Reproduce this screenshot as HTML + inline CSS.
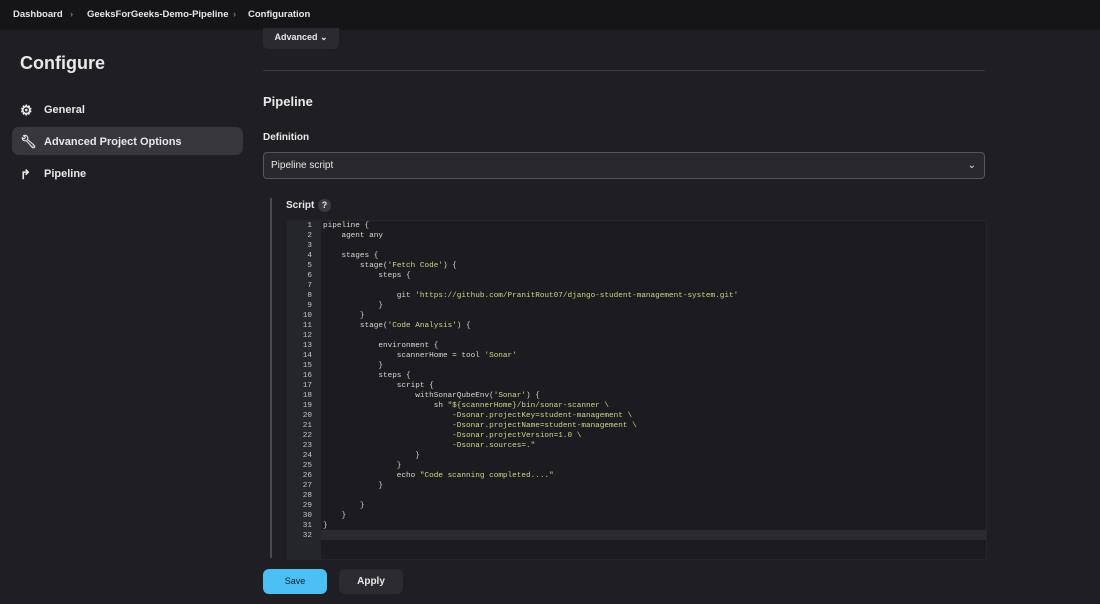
<!DOCTYPE html><html><head><style>
body{margin:0;width:1100px;height:604px;background:#1f1f23;font-family:"Liberation Sans",sans-serif;color:#e8e8ea;overflow:hidden;position:relative}
.hdr{position:absolute;left:0;top:0;width:1100px;height:30px;background:#151518;font-size:9.5px;font-weight:bold}
.hdr span{position:absolute;top:9px}
.a{position:absolute}
.nav{font-size:11px;font-weight:bold}
.code{position:absolute;left:287px;top:220px;width:698px;height:338px;background:#1c1c20;border:1px solid #26262a}
.gut{position:absolute;left:0;top:0;width:33px;height:338px;background:#25262b}
pre{margin:0;font-family:"Liberation Mono",monospace;font-size:7.7px;line-height:10px;color:#d8d8d8}
.ln{position:absolute;left:0;top:0;width:24px;text-align:right;color:#c8c8c8}
.src{position:absolute;left:35px;top:0}
.s{color:#c8d88a}
</style></head><body>
<div class="hdr"><span style="left:13px">Dashboard</span><span style="left:70px;color:#777">›</span><span style="left:87px">GeeksForGeeks-Demo-Pipeline</span><span style="left:233px;color:#777">›</span><span style="left:248px">Configuration</span></div>
<div class="a" style="left:263px;top:28px;width:76px;height:21px;background:#2a2a30;border-radius:0 0 6px 6px;font-size:9px;font-weight:bold;text-align:center;line-height:19px">Advanced ⌄</div>
<div class="a" style="left:20px;top:53px;font-size:18px;font-weight:bold">Configure</div>
<div class="a" style="left:12px;top:127px;width:231px;height:28px;background:#37373d;border-radius:7px"></div>
<div class="a nav" style="left:20px;top:102px;font-size:14px">⚙</div><div class="a nav" style="left:44px;top:104px">General</div>
<div class="a nav" style="left:20px;top:134px;font-size:13px">🔧︎</div><div class="a nav" style="left:44px;top:136px">Advanced Project Options</div>
<div class="a nav" style="left:20px;top:167px;font-size:13px">↱</div><div class="a nav" style="left:44px;top:168px">Pipeline</div>
<div class="a" style="left:263px;top:70px;width:722px;height:1px;background:#3a3a40"></div>
<div class="a" style="left:263px;top:94px;font-size:13px;font-weight:bold">Pipeline</div>
<div class="a" style="left:263px;top:132px;font-size:10px;font-weight:bold">Definition</div>
<div class="a" style="left:263px;top:152px;width:720px;height:25px;background:#28282d;border:1px solid #55555b;border-radius:4px;font-size:10px;line-height:25px;text-indent:7px">Pipeline script<span style="position:absolute;right:8px;top:0">⌄</span></div>
<div class="a" style="left:270px;top:198px;width:2px;height:360px;background:#4a4a50"></div>
<div class="a" style="left:286px;top:200px;font-size:10px;font-weight:bold">Script</div>
<div class="a" style="left:318px;top:199px;width:13px;height:13px;border-radius:50%;background:#3a3a40;font-size:9px;text-align:center;line-height:13px;font-weight:bold">?</div>
<div class="code"><div class="gut"></div>
<div style="position:absolute;left:33px;top:309px;width:665px;height:10px;background:#2a2a2f"></div>
<pre class="ln" style="top:0">1
2
3
4
5
6
7
8
9
10
11
12
13
14
15
16
17
18
19
20
21
22
23
24
25
26
27
28
29
30
31
32</pre>
<pre class="src">pipeline {
    agent any

    stages {
        stage(<span class="s">'Fetch Code'</span>) {
            steps {

                git <span class="s">'https://github.com/PranitRout07/django-student-management-system.git'</span>
            }
        }
        stage(<span class="s">'Code Analysis'</span>) {

            environment {
                scannerHome = tool <span class="s">'Sonar'</span>
            }
            steps {
                script {
                    withSonarQubeEnv(<span class="s">'Sonar'</span>) {
                        sh <span class="s">"${scannerHome}/bin/sonar-scanner \
                            -Dsonar.projectKey=student-management \
                            -Dsonar.projectName=student-management \
                            -Dsonar.projectVersion=1.0 \
                            -Dsonar.sources=."</span>
                    }
                }
                echo <span class="s">"Code scanning completed...."</span>
            }

        }
    }
}
</pre></div>
<div class="a" style="left:263px;top:569px;width:64px;height:25px;background:#4cc0f5;border-radius:6px;color:#123;font-size:9px;text-align:center;line-height:25px">Save</div>
<div class="a" style="left:339px;top:569px;width:64px;height:25px;background:#2b2b30;border-radius:6px;font-size:10px;font-weight:bold;text-align:center;line-height:25px">Apply</div>
</body></html>
